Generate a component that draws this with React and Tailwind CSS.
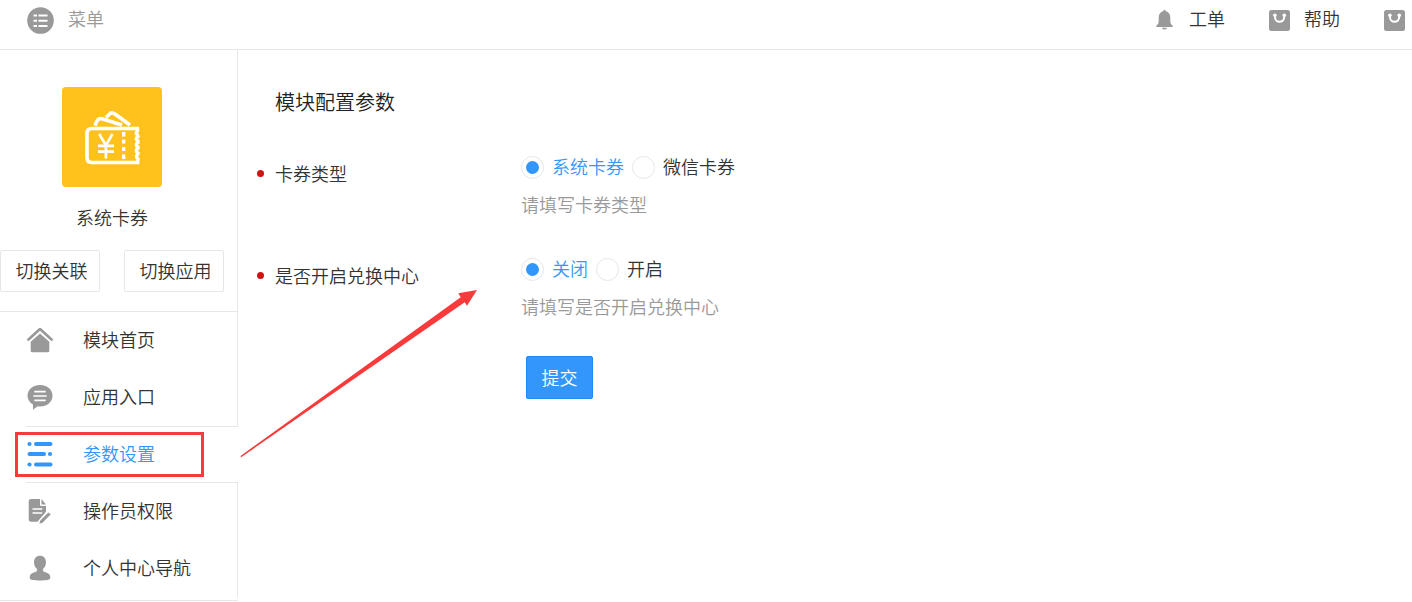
import { useState } from "react";

const MenuIcon = () => (
  <svg className="w-[27px] h-[27px]" viewBox="0 0 27 27" aria-hidden="true">
    <circle cx="13.5" cy="13.5" r="13.3" fill="#999" />
    <g fill="#fff">
      <path d="M6.5 7.5h3.500v2h-3.500zM11.5 7.5h9v2h-9zM6.5 12.700h3.500v2h-3.500zM11.5 12.700h9v2h-9zM6.5 18h3.500v2h-3.500zM11.5 18h9v2h-9z" />
    </g>
  </svg>
);

const BellIcon = () => (
  <svg className="w-[17px] h-[20px]" viewBox="0 0 17 20" aria-hidden="true">
    <path
      fill="#999"
      d="M8.5 0c.8 0 1.2.5 1.3 1.2C12.700 1.900 14.300 4.300 14.300 7.200v4.300c0 1.700.9 2.900 2.200 4.100.6.600.3 1.400-.5 1.400H1c-.8 0-1.100-.8-.5-1.400 1.300-1.200 2.200-2.400 2.200-4.100V7.200C2.700 4.300 4.300 1.900 7.200 1.200 7.300.5 7.700 0 8.500 0zM6 17.800h5c-.3 1.100-1.200 1.800-2.500 1.800S6.300 18.900 6 17.800z"
    />
  </svg>
);

const BagIcon = () => (
  <svg className="w-[21px] h-[21px]" viewBox="0 0 21 21" aria-hidden="true">
    <rect width="21" height="21" rx="2.5" fill="#999" />
    <path d="M6 5.500v1.700a4.600 4.600 0 0 0 9.200 0V5.500" fill="none" stroke="#fff" strokeWidth="2" />
    <circle cx="5.900" cy="5.300" r="1.800" fill="#fff" />
    <circle cx="15.300" cy="5.300" r="1.800" fill="#fff" />
  </svg>
);

const CouponLogo = () => (
  <svg className="w-[100px] h-[100px]" viewBox="0 0 100 100" role="img" aria-label="系统卡券">
    <rect width="100" height="100" rx="4" fill="#ffc21c" />
    <g fill="none" stroke="#fff" strokeWidth="3.600">
      <path d="M33 38.500l2-4.500q1.500-3.200 5-2.200l20 6.200" />
      <path d="M44 30.500l3-3q2.500-3 6-.5l15 11" />
      <path d="M77 41.500H30q-5 0-5 5v24q0 5 5 5h47" />
      <path
        d="M75.500 41v3q-2.600 2 0 4l.5 1.500q-3.500 2 0 4.500v1.500q-3.500 2 0 4.500v1q-3.500 2.500 0 5v1q-3 2.500 0 5l-.5 5"
        strokeWidth="3.400"
      />
      <path d="M37.200 47l6.700 11.200L50.500 47M43.900 58.500V71.500M36 58.800h16M36 64.600h16" strokeWidth="2.700" />
      <path d="M61.700 45v4.500M61.700 52.500v4M61.700 60v4M61.700 67.500v4.500" strokeWidth="3.400" />
    </g>
  </svg>
);

const HomeIcon = () => (
  <svg className="w-[26px] h-[26px]" viewBox="0 0 26 26" aria-hidden="true">
    <path d="M1.500 12.500L13 2l11.500 10.500" fill="none" stroke="#999" strokeWidth="2.600" strokeLinecap="round" strokeLinejoin="round" />
    <path d="M13 6.500l9.300 8.300v9q0 1.500-1.500 1.500H5.200q-1.500 0-1.500-1.500v-9z" fill="#999" />
  </svg>
);

const ChatIcon = () => (
  <svg className="w-[26px] h-[26px]" viewBox="0 0 26 26" aria-hidden="true">
    <path d="M13 1c7 0 12.500 4.500 12.500 10.700S20 22.400 13 22.400c-.9 0-1.700 0-2.500-.2L6 25.700V20.500C2.700 18.600.5 15.500.5 11.700.5 5.500 6 1 13 1z" fill="#999" />
    <path d="M8 7.700h10M7 12h12M8 16.300h10" stroke="#fff" strokeWidth="1.700" strokeLinecap="round" />
  </svg>
);

const SettingsIcon = () => (
  <svg className="w-[26px] h-[26px]" viewBox="0 0 26 26" aria-hidden="true">
    <g fill="#3296fa">
      <circle cx="2.500" cy="3" r="2.100" />
      <circle cx="23" cy="13" r="2.100" />
      <circle cx="2.500" cy="23.500" r="2.100" />
      <rect x="7" y="1" width="18.500" height="4" rx="2" />
      <rect x=".5" y="11" width="18.500" height="4" rx="2" />
      <rect x="7" y="21.500" width="18.500" height="4" rx="2" />
    </g>
  </svg>
);

const FileIcon = () => (
  <svg className="w-[26px] h-[26px]" viewBox="0 0 26 26" aria-hidden="true">
    <path d="M4 1h9v5.500q0 1.500 1.500 1.500H19v5.700L10.500 23.800H4q-2.300 0-2.300-2.300V3.300Q1.700 1 4 1z" fill="#999" />
    <path d="M14.500 1L19 6.500h-4.500zM21.300 14.500l2.500 1.700-8.500 8.800-2.900.5.700-2.800z" fill="#999" />
    <path d="M5.500 11h9.700M5.500 15h9.700" stroke="#fff" strokeWidth="1.600" />
  </svg>
);

const UserIcon = () => (
  <svg className="w-[26px] h-[26px]" viewBox="0 0 26 26" aria-hidden="true">
    <path
      d="M13 .8c3.800 0 6 2.700 6 6.500 0 2.900-1.200 5.400-3 6.800-.3 1.400 0 2.500 1.500 3 3.500 1.100 5.700 2 5.700 4.500v2c0 1.300-4.500 2-10.200 2s-10.200-.7-10.200-2v-2c0-2.500 2.200-3.400 5.700-4.500 1.500-.5 1.800-1.600 1.500-3-1.800-1.400-3-3.900-3-6.800C7 3.500 9.200.8 13 .8z"
      fill="#999"
    />
  </svg>
);

const menu = [
  { name: "模块首页", icon: HomeIcon },
  { name: "应用入口", icon: ChatIcon },
  { name: "参数设置", icon: SettingsIcon, active: true },
  { name: "操作员权限", icon: FileIcon },
  { name: "个人中心导航", icon: UserIcon },
];

const fields = [
  { key: "type", label: "卡券类型", options: ["系统卡券", "微信卡券"], hint: "请填写卡券类型" },
  { key: "center", label: "是否开启兑换中心", options: ["关闭", "开启"], hint: "请填写是否开启兑换中心" },
];

const Header = () => (
  <header className="flex h-[50px] items-center justify-between border-b border-[#e7e7e7] pb-[9px] pl-[27px] pr-[7px]">
    <button type="button" className="flex items-center gap-[14px] text-[#999]">
      <MenuIcon />
      <span className="pb-1">菜单</span>
    </button>
    <nav className="flex items-center gap-[44px]">
      <a href="#ticket" className="flex items-center gap-4">
        <BellIcon />
        <span className="pb-1">工单</span>
      </a>
      <a href="#help" className="flex items-center gap-[14px]">
        <BagIcon />
        <span className="pb-1">帮助</span>
      </a>
      <a href="#more" aria-label="更多">
        <BagIcon />
      </a>
    </nav>
  </header>
);

const Sidebar = () => (
  <aside className="w-[238px] shrink-0 border-b border-[#e7e7e7] pb-[3px]">
    <div className="border-b border-r border-[#e7e7e7] pt-[37px] pr-[13px] pb-[19px]">
      <div className="flex flex-col items-center gap-[17px]">
        <CouponLogo />
        <p>系统卡券</p>
      </div>
      <div className="mt-5 flex justify-between">
        <button type="button" className="h-[42px] w-[100px] rounded-xs border border-[#e7e7e7] pb-[2px] pl-[3px]">切换关联</button>
        <button type="button" className="h-[42px] w-[100px] rounded-xs border border-[#e7e7e7] pb-[2px] pl-[3px]">切换应用</button>
      </div>
    </div>
    <ul className="pl-[26px]">
      {menu.map(({ name, icon: Icon, active }) => (
        <li key={name} className="relative">
          <a
            href="#menu"
            className={`flex h-[57px] items-center gap-[30px] border-[#e7e7e7] pb-[2px] pl-px ${
              active ? "border-y text-[#3296fa]" : "border-r"
            }`}
          >
            <Icon />
            <span className="pb-[2px]">{name}</span>
          </a>
          {active && (
            <span className="pointer-events-none absolute -left-[11px] top-[6px] h-[45px] w-[189px] border-3 border-[#f93a3a]" />
          )}
        </li>
      ))}
    </ul>
  </aside>
);

const App = () => {
  const [values, setValues] = useState({ type: "系统卡券", center: "关闭" });

  return (
    <div className="relative bg-white font-['Noto_Sans_CJK_SC',sans-serif] text-[18px] leading-[26px] font-[350] text-[#333]">
      <Header />
      <div className="flex items-start">
        <Sidebar />
        <main className="min-w-0 flex-1 pt-[38px] pl-[19px]">
          <h1 className="pl-[18px] text-[20px] leading-[27px] text-[#222]">模块配置参数</h1>
          <form onSubmit={(e) => e.preventDefault()}>
            {fields.map((field) => (
              <div
                key={field.key}
                role="radiogroup"
                aria-labelledby={`${field.key}-label`}
                className="flex items-start pt-[38px]"
              >
                <div id={`${field.key}-label`} className="flex w-[264px] shrink-0 items-center gap-[11px] pt-[7px]">
                  <span className="h-[7px] w-[7px] rounded-full bg-[#d01313]" />
                  {field.label}
                </div>
                <div>
                  <div className="flex items-center gap-2">
                    {field.options.map((option) => (
                      <label key={option} className="flex items-center gap-2 has-checked:text-[#3296fa]">
                        <input
                          type="radio"
                          name={field.key}
                          checked={values[field.key] === option}
                          onChange={() => setValues({ ...values, [field.key]: option })}
                          className="grid h-[23px] w-[23px] appearance-none place-items-center rounded-full border border-[#e7e7e7] bg-white before:h-[13px] before:w-[13px] before:rounded-full checked:before:bg-[#3296fa]"
                        />
                        <span className="pb-[2px]">{option}</span>
                      </label>
                    ))}
                  </div>
                  <p className="mt-[10px] text-[#999]">{field.hint}</p>
                </div>
              </div>
            ))}
            <button
              type="submit"
              className="mt-[37px] ml-[269px] h-[43px] w-[67px] rounded-xs border border-[#1e88f7] bg-[#3296fa] pb-[2px] text-white"
            >
              提交
            </button>
          </form>
        </main>
      </div>
      {/* arrow from the active menu item to the form */}
      <svg className="pointer-events-none absolute left-[240px] top-[290px] h-[168px] w-[238px]" viewBox="0 0 238 168" aria-hidden="true">
        <path d="M.5 166L220.700 7.300 218.300 3.300 237 0 227 15.700 224.700 12.300 1.200 167.200z" fill="#f93a3a" />
      </svg>
    </div>
  );
};

export default App;
